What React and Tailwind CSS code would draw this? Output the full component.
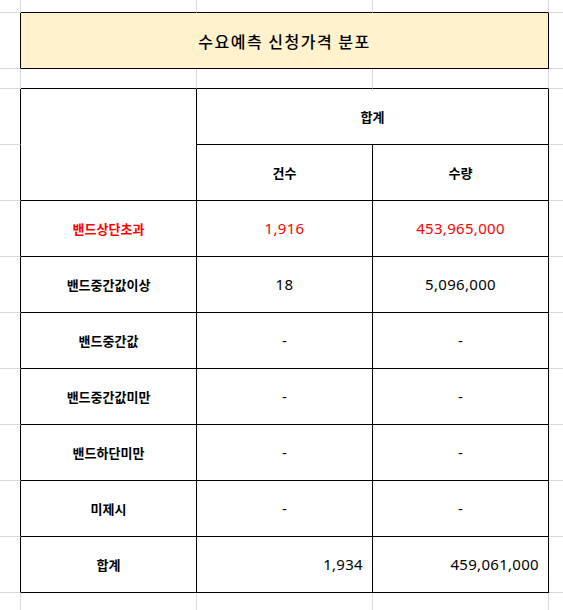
import React from "react";

const rows = [
  { label: "밴드상단초과", count: "1,916", qty: "453,965,000", red: true },
  { label: "밴드중간값이상", count: "18", qty: "5,096,000" },
  { label: "밴드중간값", count: "-", qty: "-" },
  { label: "밴드중간값미만", count: "-", qty: "-" },
  { label: "밴드하단미만", count: "-", qty: "-" },
  { label: "미제시", count: "-", qty: "-" },
];

const Cell = ({ r = "gray", b = "gray", className = "", children }) => {
  const right =
    r === "none" ? "" : r === "black" ? "border-r border-r-black" : "border-r border-r-[#d9d9d9]";
  const bottom =
    b === "none" ? "" : b === "black" ? "border-b border-b-black" : "border-b border-b-[#d9d9d9]";
  return <div className={`${right} ${bottom} ${className}`}>{children}</div>;
};

const label = "flex items-center justify-center text-[13px] font-semibold";
const num =
  "flex items-center justify-center font-['Noto_Sans','Noto_Sans_CJK_KR',sans-serif] text-[15px] tracking-[0.3px]";

export default function App() {
  return (
    <div className="w-[563px] h-[610px] overflow-hidden bg-white text-black font-['Noto_Sans_CJK_KR','Noto_Sans',sans-serif]">
      <div className="grid grid-cols-[21px_176px_176px_176px_1fr] grid-rows-[13px_56px_20px_repeat(9,56px)_1fr] h-full">
        {/* row 0 */}
        <Cell />
        <Cell b="black" />
        <Cell b="black" />
        <Cell b="black" />
        <Cell r="none" />

        {/* title */}
        <Cell r="black" />
        <Cell
          r="black"
          b="black"
          className="col-span-3 bg-[#fff2cc] flex items-center justify-center text-[16px] font-medium tracking-[1.5px]"
        >
          수요예측 신청가격 분포
        </Cell>
        <Cell r="none" />

        {/* gap row */}
        <Cell />
        <Cell b="black" />
        <Cell b="black" />
        <Cell b="black" />
        <Cell r="none" />

        {/* header */}
        <Cell r="black" />
        <Cell r="black" b="black" className="row-span-2" />
        <Cell r="black" b="black" className={`col-span-2 ${label}`}>
          합계
        </Cell>
        <Cell r="none" />

        <Cell r="black" />
        <Cell r="black" b="black" className={label}>
          건수
        </Cell>
        <Cell r="black" b="black" className={label}>
          수량
        </Cell>
        <Cell r="none" />

        {rows.map((row) => (
          <React.Fragment key={row.label}>
            <Cell r="black" />
            <Cell
              r="black"
              b="black"
              className={`${label} ${row.red ? "text-[#ff0000]" : ""}`}
            >
              {row.label}
            </Cell>
            <Cell
              r="black"
              b="black"
              className={`${num} ${row.red ? "text-[#ff0000]" : ""}`}
            >
              {row.count}
            </Cell>
            <Cell
              r="black"
              b="black"
              className={`${num} ${row.red ? "text-[#ff0000]" : ""}`}
            >
              {row.qty}
            </Cell>
            <Cell r="none" />
          </React.Fragment>
        ))}

        {/* total */}
        <Cell r="black" />
        <Cell r="black" b="black" className={label}>
          합계
        </Cell>
        <Cell r="black" b="black" className={`${num} justify-end pr-[9px]`}>
          1,934
        </Cell>
        <Cell r="black" b="black" className={`${num} justify-end pr-[9px]`}>
          459,061,000
        </Cell>
        <Cell r="none" />

        {/* bottom row */}
        <Cell b="none" />
        <Cell b="none" />
        <Cell b="none" />
        <Cell b="none" />
        <Cell r="none" b="none" />
      </div>
    </div>
  );
}
